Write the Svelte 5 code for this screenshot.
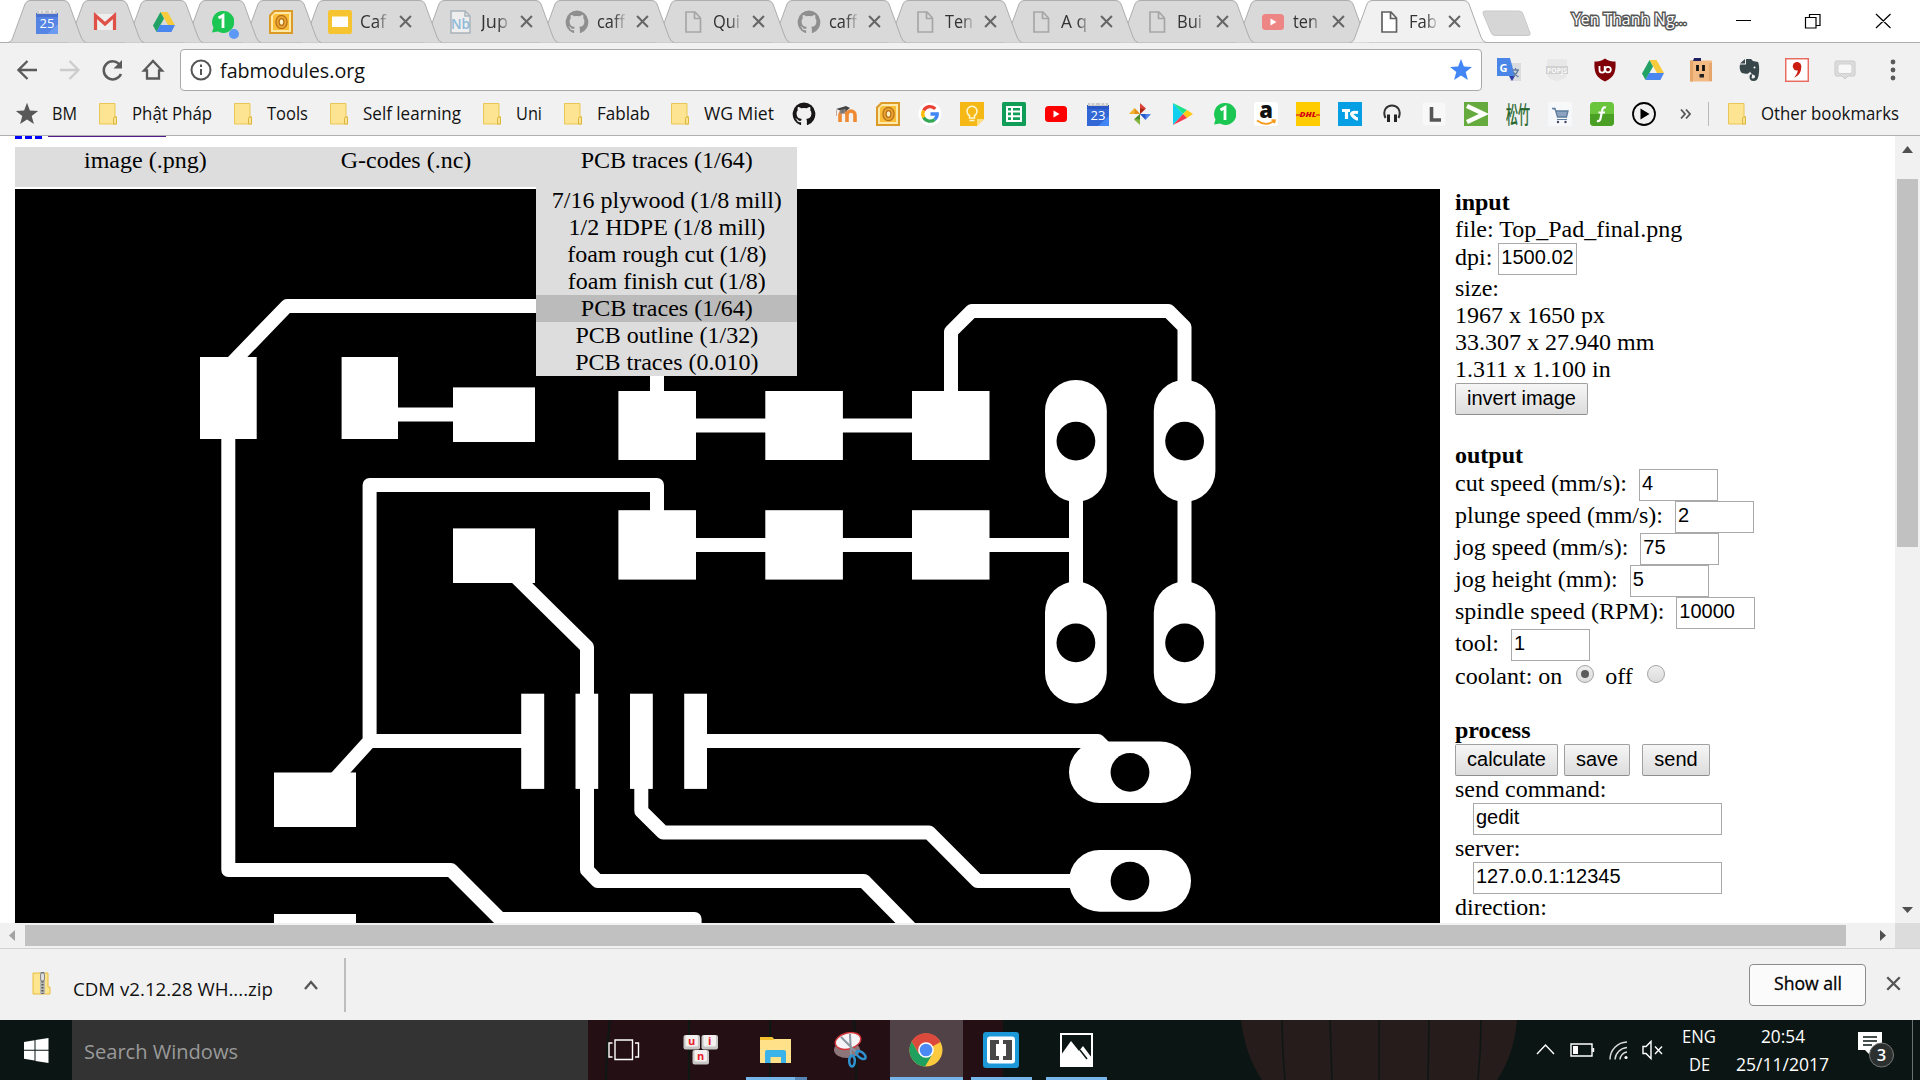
<script>
  const tabs = [
    { icon: 'cal25', w: 78 }, { icon: 'gmail', w: 78 }, { icon: 'drive', w: 79 },
    { icon: 'chat', w: 78, dot: true }, { icon: 'outlook', w: 80 },
    { icon: 'slides', w: 141, t: 'Caf', tw: 26 }, { icon: 'nb', w: 136, t: 'Jup', tw: 27 },
    { icon: 'githubGrey', w: 136, t: 'caff', tw: 28 }, { icon: 'page', w: 136, t: 'Qui', tw: 27 },
    { icon: 'githubGrey', w: 136, t: 'caff', tw: 28 }, { icon: 'page', w: 136, t: 'Ten', tw: 28 },
    { icon: 'page', w: 136, t: 'A q', tw: 26 }, { icon: 'page', w: 136, t: 'Bui', tw: 25 },
    { icon: 'youtubePale', w: 136, t: 'ten', tw: 25 }, { icon: 'pageDark', w: 136, t: 'Fab', tw: 28, active: true }
  ];
  const folders = [
    { t: 'Phật Pháp', tw: 80, w: 135 }, { t: 'Tools', tw: 41, w: 96 },
    { t: 'Self learning', tw: 98, w: 153 }, { t: 'Uni', tw: 26, w: 81 },
    { t: 'Fablab', tw: 53, w: 107 }, { t: 'WG Miet', tw: 70, w: 121 }
  ];
  const marks = ['github', 'moodle', 'outlook', 'google', 'keep', 'sheets', 'youtube', 'cal23', 'photos', 'play', 'chat', 'amazon', 'dhl', 'tc', 'phones', 'ell', 'chevron', 'bamboo', 'cart', 'eff', 'circleplay'];
  const extensions = ['translate', 'popjs', 'ublock', 'drive', 'boxface', 'evernote', 'comma', 'bubble'];
  const presets = ['7/16 plywood (1/8 mill)', '1/2 HDPE (1/8 mill)', 'foam rough cut (1/8)', 'foam finish cut (1/8)', 'PCB traces (1/64)', 'PCB outline (1/32)', 'PCB traces (0.010)'];
  const outputs = [
    ['cut speed (mm/s):', '4'], ['plunge speed (mm/s):', '2'], ['jog speed (mm/s):', '75'],
    ['jog height (mm):', '5'], ['spindle speed (RPM):', '10000'], ['tool:', '1']
  ];
  const pads = [
    [200, 357, 56.7, 82], [341.6, 357, 56.4, 82], [453, 387.4, 82, 54.6], [453, 528.4, 82, 54.6],
    [274, 772.5, 82, 54.5], [274, 914, 82, 20],
    [618.4, 391, 77.6, 69], [765.3, 391, 77.6, 69], [912, 391, 77.5, 69],
    [618.4, 510.2, 77.6, 69.4], [765.3, 510.2, 77.6, 69.4], [912, 510.2, 77.5, 69.4],
    [521.2, 693.7, 23, 95.2], [575.5, 693.7, 22.7, 95.2], [630, 693.7, 22.8, 95.2], [684.2, 693.7, 22.8, 95.2]
  ];
  const traces = [
    '228,367 287,306 600,306', '390,414.6 460,414.6', '228.3,430 228.3,870 451,870 500,919 694.6,919 694.6,940',
    '331.5,783 369.6,741 369.6,485 657,485 657,520', '369.6,741 530,741',
    '514,575 587,647 587,870 597.5,881 864,881 920,938', '641.3,780 641.3,811 663,832.4 929,832.4 977.5,881 1085,881',
    '700,741 1098,741 1117,760', '657,360 657,400', '690,425.5 920,425.5', '690,545 1076,545',
    '951,400 951,331.6 971.7,311 1168.5,311 1184.5,327 1184.5,600', '1076,480 1076,600'
  ];
  const ovals = [
    [1045, 380, 61.8, 121.8], [1153.8, 380, 61.6, 121.8], [1045, 581.6, 61.8, 122], [1153.8, 581.6, 61.6, 122],
    [1069, 741.4, 122, 61.6], [1069, 850, 122, 61.7]
  ];
</script>

{#snippet label(t, w, size, fill)}
  <svg class="label" width={w} height={size * 1.4}>
    <text x="0" y={size * 1.06} textLength={w} lengthAdjust="spacingAndGlyphs" font-size={size} fill={fill}>{t}</text>
  </svg>
{/snippet}

{#snippet cat(c)}
  <path fill={c} d="M12 .5A11.6 11.6 0 0 0 8.3 23c.6.1.8-.3.8-.6v-2.200c-3.200.7-3.900-1.400-3.900-1.400-.5-1.300-1.300-1.700-1.300-1.700-1-.7.1-.7.1-.7 1.200.1 1.800 1.200 1.800 1.200 1 1.800 2.700 1.300 3.400 1 .1-.8.4-1.300.7-1.600-2.600-.3-5.300-1.300-5.300-5.700 0-1.300.5-2.300 1.200-3.100-.1-.3-.5-1.500.1-3.100 0 0 1-.3 3.200 1.200a11 11 0 0 1 5.800 0c2.200-1.500 3.200-1.200 3.200-1.200.6 1.600.2 2.800.1 3.100.8.8 1.200 1.800 1.200 3.100 0 4.500-2.700 5.400-5.300 5.700.4.400.8 1.100.8 2.200v3.200c0 .3.2.7.8.6A11.600 11.600 0 0 0 12 .5z" />
{/snippet}

{#snippet icon(n)}
  <svg class="icon" width="24" height="24" viewBox="0 0 24 24">
    {#if n === 'cal25' || n === 'cal23'}
      <rect x="1" y="3" width="22" height="21" fill={n === 'cal25' ? '#5484e4' : '#3367d6'} />
      <path d="M1 3h22v4H1z" fill={n === 'cal25' ? '#4a71cf' : '#2a56c6'} />
      <path d="M2 1h20v3H2z" fill="#c9c9c9" /><path d="M5 0v3M9 0v3M15 0v3M19 0v3" stroke="#eee" stroke-width="1.500" />
      <path d="M12 24l11-10v10z" fill={n === 'cal25' ? '#6a9bf0' : '#4285f4'} />
      <text x="12" y="18.300" text-anchor="middle" font-size="13" fill="#fff">{n === 'cal25' ? '25' : '23'}</text>
    {:else if n === 'gmail'}
      <rect x="1" y="4" width="22" height="16" fill="#eee" /><path d="M2.500 20V5.500L12 14l9.500-8.500V20" fill="none" stroke="#df5147" stroke-width="3.200" />
    {:else if n === 'drive'}
      <path d="M8.500 2h7L23 15h-7z" fill="#f8cb3c" /><path d="M8.500 2L12 8.500 4.500 22 1 15.500z" fill="#22a264" /><path d="M8 15h15l-3.600 7H4.500z" fill="#4a86ef" />
    {:else if n === 'chat'}
      <path d="M12 1a11 11 0 1 1-4 20.500L2 22.500l1.500-5A11 11 0 0 1 12 1z" fill="#1bc653" /><path d="M8.500 8L13 5.500V18" fill="none" stroke="#fff" stroke-width="2.800" />
    {:else if n === 'outlook'}
      <path d="M5 0h19v24H0V5z" fill="#dc9b28" /><path d="M6 2h16v20H2V6z" fill="#ffe9a8" /><path d="M6 4h14v16H4V6z" fill="#f9bd38" />
      <ellipse cx="12.500" cy="12" rx="4" ry="5" fill="#fff0c0" stroke="#b9701b" stroke-width="4.500" />
      <ellipse cx="12.500" cy="12" rx="4" ry="5" fill="none" stroke="#e9a52f" stroke-width="2" />
    {:else if n === 'slides'}
      <rect width="24" height="24" rx="2.500" fill="#f6c431" /><rect x="4" y="6.500" width="16" height="10.500" fill="#fff" />
    {:else if n === 'nb'}
      <path d="M2 1h14l5 5v17H2z" fill="#eee" stroke="#a9b4bc" stroke-width="1.500" /><path d="M16 1v5h5" fill="none" stroke="#a9b4bc" stroke-width="1.500" />
      <text x="2" y="18.500" font-size="13.500" font-weight="600" textLength="19" lengthAdjust="spacingAndGlyphs" fill="#8fb9d9">Nb</text>
    {:else if n === 'github'}
      {@render cat('#181616')}
    {:else if n === 'githubGrey'}
      {@render cat('#8f8f8f')}
    {:else if n === 'page' || n === 'pageDark'}
      <path d="M5 2h9l5.500 6v14H5zM13.500 2v6.500h6" fill={n === 'page' ? 'none' : '#fff'} stroke={n === 'page' ? '#a6a6a6' : '#606060'} stroke-width="1.700" />
    {:else if n === 'youtube' || n === 'youtubePale'}
      <rect x="1" y="4" width="22" height="16" rx="3.500" fill={n === 'youtube' ? '#f00' : '#ee8585'} /><path d="M9.500 8.500v7l6-3.500z" fill="#fff" />
    {:else if n === 'moodle'}
      <path d="M6 20v-7a3.500 3.500 0 0 1 7 0v7M13 13a3.500 3.500 0 0 1 8 0v7" fill="none" stroke="#ef8a33" stroke-width="3.600" />
      <path d="M2 7l10-3 4 2-5 4z" fill="#444" /><path d="M6 8v4l5-1V7M2.500 8v6" fill="#777" stroke="#b98" stroke-width=".8" />
    {:else if n === 'google'}
      <circle cx="12" cy="12" r="11.500" fill="#fff" />
      <g fill="none" stroke-width="3.300"><path d="M17.300 6.900A7.200 7.200 0 0 0 5.700 8.500" stroke="#ea4335" /><path d="M5.700 8.500a7.200 7.200 0 0 0 0 7" stroke="#fbbc05" /><path d="M5.700 15.500a7.200 7.200 0 0 0 11 1.900" stroke="#34a853" /><path d="M16.700 17.400a7 7 0 0 0 2.500-5.400H12.500" stroke="#4285f4" /></g>
    {:else if n === 'keep'}
      <path d="M0 0h24v17l-7 7H0z" fill="#f5b816" /><path d="M24 17h-7v7z" fill="#ffdf80" /><path d="M9.500 16v-2.500a5 5 0 1 1 5 0V16zM9.500 18.500h5" fill="none" stroke="#fff6cf" stroke-width="1.500" />
    {:else if n === 'sheets'}
      <rect width="24" height="24" rx="1.500" fill="#109d58" /><path d="M5 5h14v14H5zM5 9.600h14M5 14.200h14M10 5v14" fill="none" stroke="#fff" stroke-width="2" />
    {:else if n === 'photos'}
      <path d="M12 12V1l6 5.500z" fill="#d84437" /><path d="M12 12h11l-5.500 6z" fill="#4c83ec" /><path d="M12 12v11l-6-5.500z" fill="#83b53f" /><path d="M12 12H1l5.500-6z" fill="#f2b42e" />
      <path d="M12 12V6.500l5 .5z" fill="#a52714" /><path d="M12 12h5.500v5.500z" fill="#2a56c6" /><path d="M12 12v5.500l-5.500-.5z" fill="#4e8a2e" /><path d="M12 12H6.500L7 6.500z" fill="#e08f1b" />
    {:else if n === 'play'}
      <path d="M3 1l10 11L3 23z" fill="#0fd0ef" /><path d="M3 1l14 7-4 4z" fill="#19e386" /><path d="M17 8l6 4-6 4-4-4z" fill="#ffca16" /><path d="M3 23l14-7-4-4z" fill="#f23b50" />
    {:else if n === 'amazon'}
      <rect width="24" height="24" rx="3" fill="#fff" /><text x="12" y="16" text-anchor="middle" font-size="22" font-weight="800" fill="#111">a</text><path d="M3 18.500c6 4.500 12 4 17 .5M17.500 18l3.500.3-.8 3" fill="none" stroke="#f79a1c" stroke-width="1.700" />
    {:else if n === 'dhl'}
      <rect width="24" height="24" fill="#fc0" /><text x="3.500" y="14.500" textLength="17" lengthAdjust="spacingAndGlyphs" font-size="7" font-weight="800" font-style="italic" fill="#d40511">DHL</text><path d="M0 13h4M20 13h4" stroke="#d40511" />
    {:else if n === 'tc'}
      <rect width="24" height="24" fill="#069fe3" /><path d="M4 8.500h8M8.500 8v9M20 10.500c-6-1-8 1-5 3.500 2 2 3 3 5 3" fill="none" stroke="#fff" stroke-width="3.200" />
    {:else if n === 'phones'}
      <path d="M5.500 16C2 8 7 3.500 12 3.500S22 8 18.500 16" fill="none" stroke="#333" stroke-width="2" /><path d="M7 12.500h3V20H7zM14 12.500h3V20h-3z" fill="#222" />
    {:else if n === 'ell'}
      <rect x=".5" y=".5" width="23" height="23" rx="2" fill="#f8f8f8" /><path d="M9.500 5v13H19" fill="none" stroke="#555" stroke-width="3.600" />
    {:else if n === 'chevron'}
      <rect width="24" height="24" fill="#65aa3d" /><path d="M3 4l17 8-17 8" fill="none" stroke="#fff" stroke-width="4.500" />
    {:else if n === 'bamboo'}
      <text class="cjk" x="0" y="20.500" font-size="23" textLength="24" lengthAdjust="spacingAndGlyphs" fill="#24662c" stroke="#24662c" stroke-width=".5">松竹</text>
    {:else if n === 'cart'}
      <rect width="24" height="24" fill="#f7f8fa" /><path d="M4 6.500h3l2.500 8.500h9l1.500-6H8" fill="#8da4c0" stroke="#5e7d9f" stroke-width="1.300" /><path d="M9 17.500h10" stroke="#5e7d9f" /><circle cx="10" cy="20" r="1.200" fill="#446" /><circle cx="17.500" cy="20" r="1.200" fill="#446" />
    {:else if n === 'eff'}
      <rect width="24" height="24" rx="4" fill="#6ac43c" /><path d="M0 12h24v8a4 4 0 0 1-4 4H4a4 4 0 0 1-4-4z" fill="#4a9f25" /><path d="M16 5.500c-3-.8-3.500 1-4 4l-1.500 7c-.4 2-1.500 3-3.500 2.400M8.500 10.500h6.500" fill="none" stroke="#fff" stroke-width="2.200" />
    {:else if n === 'circleplay'}
      <circle cx="12" cy="12" r="11" fill="none" stroke="#000" stroke-width="1.800" /><path d="M8.500 6.500v11l9-5.500z" />
    {:else if n === 'translate'}
      <path d="M10 5h14v18H13z" fill="#dadce0" /><path d="M0 0h13l5 18H0z" fill="#4a86e8" /><path d="M12 18h6l-3 5z" fill="#2f3fa4" /><text x="2.500" y="13.500" font-size="11" font-weight="700" fill="#fff">G</text><path d="M15 12h7M18.500 10v2M21 12c-1 4-3 5-5 6M16.500 14c1 3 3 4 5 5" fill="none" stroke="#657e9f" stroke-width="1.300" />
    {:else if n === 'popjs'}
      <path d="M2 1h20v7H2zM2 16h20l-2 4-8 3.500L4 20z" fill="#e8e8e8" /><rect x="1" y="8" width="22" height="8" fill="#d1d1d1" /><text x="2" y="14.500" textLength="20" lengthAdjust="spacingAndGlyphs" font-size="7.500" font-weight="700" fill="#fafafa">POPJS</text>
    {:else if n === 'ublock'}
      <path d="M12 .5C9 3 5 3.500 1.500 3.500 1 13 2 19 12 23.500 22 19 23 13 22.500 3.500 19 3.500 15 3 12 .5z" fill="#800007" /><path d="M6.500 8v4a2.600 2.600 0 0 0 5.200 0V8" fill="none" stroke="#fff" stroke-width="1.800" /><circle cx="15" cy="11.600" r="2.800" fill="none" stroke="#fff" stroke-width="1.800" />
    {:else if n === 'boxface'}
      <rect x="1" y="2.500" width="22" height="21" fill="#f4ba83" /><path d="M1 2.500h3v21H1zM20 5h3v18h-3z" fill="#e6a56b" /><path d="M8.500 7v6M14.500 7v6" stroke="#111" stroke-width="2.800" /><path d="M10.500 16h4.500v3.500h-4.500z" fill="#222" /><path d="M5 0h7v3H4z" fill="#20205e" />
    {:else if n === 'evernote'}
      <path d="M9 1h5l2 2 5 1c1.500 3 1.500 9 .5 14-.5 3-2 5-5 5-3 0-4-2-4-4 0-1.800 1-3 2.500-3v2.500c-1 .5-.5 2 1 2 1.800 0 2-1 2-3-2-.5-4-1.500-5-4-1 3-5 2.500-8 1.500C2.500 13 2.500 9 3 6.500h6z" fill="#37474a" /><path d="M3 5.500L8 1v4.500z" fill="#37474a" /><circle cx="17.500" cy="9.500" r="1" fill="#fff" />
    {:else if n === 'comma'}
      <rect x=".7" y=".7" width="22.600" height="22.600" fill="#fff" stroke="#e86a5f" stroke-width="1.500" /><circle cx="12" cy="8.300" r="4.200" fill="#cc1d12" /><path d="M16.200 8c.3 6-2 9.500-7 11.500 2.500-3 4-5.500 3.500-9z" fill="#cc1d12" />
    {:else if n === 'bubble'}
      <path d="M3.500 3h17a1.500 1.500 0 0 1 1.500 1.500v12a1.500 1.500 0 0 1-1.500 1.500H15l-3 3-3-3H3.500A1.500 1.500 0 0 1 2 16.500v-12A1.500 1.500 0 0 1 3.500 3z" fill="#dcdcdc" stroke="#cacaca" /><rect x="5" y="6" width="14" height="9.500" rx="2" fill="#f8f8f8" stroke="#cfcfcf" />
    {:else if n === 'folder'}
      <path d="M3.500 1.500h15.500v13h1.500v7.500H3.500z" fill="#fde492" stroke="#e9c756" /><path d="M17.500 22v-5.500a1.500 1.500 0 0 1 3 0V22z" fill="#fde492" stroke="#dcb53c" />
    {:else if n === 'star'}
      <path d="M12 .8l2.900 7.700 8.200.4-6.400 5.100 2.200 8L12 17.500 5.100 22l2.200-8L.9 8.900l8.200-.4z" fill="#585858" />
    {/if}
  </svg>
{/snippet}

{#snippet cross(s, c, sw)}
  <svg class="icon" width={s} height={s} viewBox="0 0 12 12"><path d="M1 1l10 10M11 1L1 11" stroke={c} stroke-width={sw} /></svg>
{/snippet}

<div class="screen">
  <header class="strip">
    <div class="tabs">
      {#each tabs as tab, i}
        <div class="tab" class:active={tab.active} class:pinned={!tab.t} style:width="{tab.w}px" style:z-index={tab.active ? 30 : 20 - i}>
          <svg class="shape" width={tab.w} height="43">
            <path d="M0 42.500C3 42 4 40 5 37L17 4Q18.500.5 22 .5H{tab.w - 22}Q{tab.w - 18.5} .5 {tab.w - 17} 4L{tab.w - 5} 37Q{tab.w - 3} 42 {tab.w} 42.500" fill={tab.active ? '#f1f1f1' : '#d9d9d9'} stroke="#adadad" />
          </svg>
          {@render icon(tab.icon)}
          {#if tab.dot}<span class="dot"></span>{/if}
          {#if tab.t}
            <span class="title">{@render label(tab.t, tab.tw, 18, '#333')}</span>
            {@render cross(13, '#666', 1.9)}
          {/if}
        </div>
      {/each}
    </div>
    <svg class="newtab" width="52" height="28"><path d="M4 2h34q3 0 4 3l7 19q1 2.500-2 2.500H14q-3 0-4-3L2 4.500Q1.500 2 4 2z" fill="#d6d6d6" stroke="#c8c8c8" /></svg>
    <svg class="profile" width="117" height="30"><text x="0" y="20" textLength="115" lengthAdjust="spacingAndGlyphs" font-size="17">Yen Thanh Ng...</text></svg>
    <svg class="win" width="156" height="16" fill="none" stroke="#000" stroke-width="1.200"><path d="M0 7.500h15M73.500 4.500v-3H84v11h-3.500M69.500 4.500H80v10.500H69.500zM140 1l14.500 14M154.500 1L140 15" /></svg>
  </header>

  <div class="toolbar">
    <svg class="nav" width="150" height="24" fill="none" stroke="#5a5a5a" stroke-width="2.300">
      <path d="M20 12H2M10.500 3L1.500 12l9 9" /><path d="M43 12h18M52.500 3l9 9-9 9" stroke="#ccc" />
      <path d="M104 16a9 9 0 1 1-1-9" stroke-width="2.500" /><path d="M105 2v8.500h-8.500z" fill="#5a5a5a" stroke="none" />
      <path d="M130 20.500v-8h-3L136 3l9 9.500h-3v8z" />
    </svg>
    <div class="address">
      <svg class="icon" width="22" height="22" fill="none" stroke="#555" stroke-width="2"><circle cx="11" cy="11" r="9.500" /><path d="M11 10v6M11 5.500v2.400" /></svg>
      <span class="url">{@render label('fabmodules.org', 145, 20.5, '#111')}</span>
      <svg class="fav" width="24" height="24"><path d="M12 1l2.900 7.600 8.100.4-6.300 5.100 2.200 7.900L12 17.500 5.100 22l2.200-7.900L1 9l8.100-.4z" fill="#4285f4" /></svg>
    </div>
    <div class="extensions">
      {#each extensions as e}{@render icon(e)}{/each}
      <svg class="icon" width="24" height="24" fill="#5a5a5a"><circle cx="12" cy="4" r="2.400" /><circle cx="12" cy="12" r="2.400" /><circle cx="12" cy="20" r="2.400" /></svg>
    </div>
  </div>

  <div class="bookmarks">
    <div class="bm">{@render icon('star')}{@render label('BM', 25, 18, '#111')}</div>
    {#each folders as f}
      <div class="folder" style:width="{f.w}px">{@render icon('folder')}{@render label(f.t, f.tw, 18, '#111')}</div>
    {/each}
    <div class="marks">{#each marks as m}{@render icon(m)}{/each}</div>
    <svg class="more" width="12" height="12" fill="none" stroke="#555" stroke-width="1.800"><path d="M1 1.500L5 6l-4 4.500M6 1.500L10 6l-4 4.500" /></svg>
    <span class="rule"></span>
    <div class="folder">{@render icon('folder')}{@render label('Other bookmarks', 138, 18, '#111')}</div>
  </div>

  <div class="viewport">
    <main class="page">
      <div class="links"><i></i><i></i><i></i><b></b></div>
      <nav class="menu">
        <div>image (.png)</div>
        <div>G-codes (.nc)</div>
        <div>PCB traces (1/64)
          <ul>{#each presets as p, i}<li class:on={i === 4}>{p}</li>{/each}</ul>
        </div>
      </nav>
      <div class="work">
        <svg class="board" width="1425" height="734" viewBox="15 189 1425 734">
          <g fill="none" stroke="#fff" stroke-width="14" stroke-linejoin="round">
            {#each traces as t}<polyline points={t} />{/each}
          </g>
          <g fill="#fff">
            {#each pads as [x, y, w, h]}<rect {x} {y} width={w} height={h} />{/each}
            {#each ovals as [x, y, w, h]}<rect {x} {y} width={w} height={h} rx="30.800" />{/each}
          </g>
          {#each ovals as [x, y, w, h]}<circle cx={x + w / 2} cy={y + h / 2 + .2} r="19.400" />{/each}
        </svg>
        <section class="panel">
          <h2>input</h2>
          <div class="line">file: Top_Pad_final.png</div>
          <div class="row dpi">dpi:<span class="field">1500.02</span></div>
          <div class="line">size:</div>
          <div class="line">1967 x 1650 px</div>
          <div class="line">33.307 x 27.940 mm</div>
          <div class="line">1.311 x 1.100 in</div>
          <div class="row"><button class="invert">invert image</button></div>
          <h2 class="gap">output</h2>
          {#each outputs as [k, v]}
            <div class="row">{k}<span class="field">{v}</span></div>
          {/each}
          <div class="coolant">coolant: on<span class="radio sel"></span>off<span class="radio"></span></div>
          <h2 class="gap">process</h2>
          <div class="row"><button class="calc">calculate</button><button class="save">save</button><button class="send">send</button></div>
          <div class="line">send command:</div>
          <div class="row wide"><span class="field">gedit</span></div>
          <div class="line">server:</div>
          <div class="row wide"><span class="field">127.0.0.1:12345</span></div>
          <div class="line">direction:</div>
        </section>
      </div>
    </main>
    <div class="vbar">
      <svg width="25" height="25" fill="#505050"><path d="M7 17h11l-5.500-7z" /></svg>
      <span></span>
      <svg width="25" height="25" fill="#505050"><path d="M7 9h11l-5.500 6z" /></svg>
    </div>
    <div class="hbar">
      <svg width="25" height="25" fill="#a3a3a3"><path d="M15 7v11l-6-5.500z" /></svg>
      <span></span>
      <svg width="25" height="25" fill="#505050"><path d="M10 7v11l6-5.500z" /></svg>
    </div>
    <div class="corner"></div>
  </div>

  <div class="shelf">
    <svg class="zip" width="20" height="24"><path d="M1 2h15v14h2v7H1z" fill="#fde58f" stroke="#e8bd3c" /><path d="M8 1h5v22H8z" fill="#b8b8b0" /><path d="M10.500 1v22" stroke="#555" stroke-width="2" stroke-dasharray="1.500 1.500" /><rect x="8.500" y="2" width="4" height="8" rx="2" fill="#ddd" stroke="#888" /></svg>
    <span class="fname">{@render label('CDM v2.12.28 WH....zip', 200, 19, '#111')}</span>
    <svg class="up" width="16" height="10"><path d="M2 9l6-7 6 7" fill="none" stroke="#555" stroke-width="2.300" /></svg>
    <span class="divider"></span>
    <div class="showall">{@render label('Show all', 68, 17.5, '#000')}</div>
    {@render cross(15, '#555', 1.9)}
  </div>

  <footer class="taskbar">
    <div class="start"><svg width="25" height="25" fill="#fff"><path d="M0 4l10.500-1.700v9.500H0zM11.500 2L24.500 0v11.800h-13zM0 12.800h10.500v9.600L0 20.700zM11.500 12.800h13V25l-13-2z" /></svg></div>
    <div class="search">{@render label('Search Windows', 154, 20, '#9a9a9a')}</div>
    <div class="apps">
      <svg class="wall" width="415" height="60" fill="none" stroke="#0d1815" stroke-width="2"><path d="M22 0q-4 30-4 60M101 0v60M182 0v60M266 0q3 30 2 60M348 0q6 30 6 60" /></svg>
      <div class="app a1"><svg width="32" height="22" fill="none" stroke="#fff" stroke-width="1.400"><path d="M7 1h17.500v19.500H7zM4.500 4H1v14h3.500M27 4h3.500v14H27" /></svg></div>
      <div class="app a2">
        <svg width="36" height="32">
          {#each [[0, 1, 'u'], [18, 1, 'i'], [9, 16, 'n']] as [x, y, c]}
            <rect x={x + .5} {y} width="16.500" height="14.500" rx="2" fill="#c9c6c6" /><rect x={x + 2.5} {y} width="12.500" height="11.500" rx="1.500" fill="#f4f0f0" />
            <text x={x + 8.7} y={y + 9.5} text-anchor="middle" font-size="11" font-weight="700" fill="#e8202c">{c}</text>
          {/each}
        </svg>
      </div>
      <div class="app a3 run"><svg width="32" height="28"><path d="M0 1h12l2 2h17v24H0z" fill="#ffe18a" /><path d="M0 1h12l2 3H0z" fill="#f5c02e" /><path d="M5 27V16q0-2 2-2h17q2 0 2 2v11h-5v-6H10.500v6z" fill="#3bb2e8" /></svg></div>
      <div class="app a4"><svg width="36" height="36" fill="none"><ellipse cx="14" cy="18" rx="13" ry="8" fill="#8d767a" /><ellipse cx="15" cy="9" rx="13" ry="8" transform="rotate(-14 15 9)" fill="#f5f4f6" stroke="#d0353a" stroke-width="1.500" /><path d="M8 5l16 16M17 2l1 21" stroke="#8a95a0" stroke-width="2" /><ellipse cx="28" cy="23" rx="5.500" ry="2.800" transform="rotate(38 28 23)" stroke="#2e92cf" stroke-width="2.500" /><ellipse cx="19" cy="29" rx="2.800" ry="5.500" stroke="#2e92cf" stroke-width="2.500" /></svg></div>
      <div class="app a5 run"><svg width="34" height="34"><circle cx="17" cy="17" r="16.500" fill="#fbca3e" /><path d="M17 17L2.500 9A16.500 16.500 0 0 1 31.500 9z" fill="#db4a3d" /><path d="M17 9h14.300A16.500 16.500 0 0 0 2.700 8.700L10 21z" fill="#db4a3d" /><path d="M2.700 8.700A16.500 16.500 0 0 0 16 33.500L23.500 21 10 21z" fill="#1fa05f" /><circle cx="17" cy="17" r="7.800" fill="#fff" /><circle cx="17" cy="17" r="6.300" fill="#4a8af4" /></svg></div>
      <div class="app a6 run"><svg width="36" height="36"><rect width="36" height="36" rx="3" fill="#1c97d8" /><rect x="4" y="4.500" width="28" height="27" rx="3" fill="#fff" /><path d="M7 8h9v4h-3v12h3v4H7zM29 8h-9v4h3v12h-3v4h9z" fill="#474747" /></svg></div>
      <div class="app a7 run"><svg width="33" height="34"><rect x="1" y="1" width="31" height="32" fill="#0b1614" stroke="#fff" stroke-width="2" /><path d="M1 22L11 8l8 10 4-5 9 12v8H1z" fill="#fff" /><path d="M20 17l7 9" stroke="#0b1614" stroke-width="1.500" /></svg></div>
    </div>
    <svg class="pumpkin" width="276" height="60"><path d="M0 0h276q-3 35-20 60H21Q4 35 0 0z" fill="#251c1b" /><path d="M41 0q0 30 3 60M89 0l2 60M138 0v60M188 0l-1 60M240 0q0 30-3 60" fill="none" stroke="#0e1614" stroke-width="1.500" /></svg>
    <svg class="tray" width="130" height="22" fill="none" stroke="#fff" stroke-width="1.400">
      <path d="M1 15l8.500-9 8.500 9" /><path d="M35 5h21v12H35zM57.500 9v4" /><path d="M37 7h5v8h-5z" fill="#fff" stroke="none" />
      <g stroke="#ddd"><path d="M74 20.500A17.500 17.500 0 0 1 91 3M79 20.500A13 13 0 0 1 91 8.500M84 20.500A8 8 0 0 1 91 13" /></g><circle cx="90" cy="18.500" r="1.600" fill="#fff" stroke="none" />
      <path d="M107 7.500h3l5-5v17l-5-5h-3zM119 7.500l7 7.500M126 7.500l-7 7.500" />
    </svg>
    <div class="stack lang">{@render label('ENG', 34, 18, '#fff')}{@render label('DE', 21, 18, '#fff')}</div>
    <div class="stack clock">{@render label('20:54', 44, 18, '#fff')}{@render label('25/11/2017', 93, 18, '#fff')}</div>
    <svg class="note" width="38" height="38"><path d="M0 1h24v18H12l0 5-5-5H0z" fill="#fff" /><path d="M5 6h14M5 10h14M5 14h9" stroke="#0b1614" stroke-width="1.400" /><circle cx="23.500" cy="24" r="12" fill="#2c3130" stroke="#777" /><text x="23.500" y="30" text-anchor="middle" font-size="16.500" font-weight="600" fill="#fff">3</text></svg>
    <span class="peek"></span>
  </footer>
</div>

<style>
  :global(body) { margin: 0; background: #fff; }
  .screen { width: 1920px; height: 1080px; overflow: hidden; display: flex; flex-direction: column; background: #fff; font-family: "Open Sans", "Noto Sans", sans-serif; }
  svg { display: block; flex: none; }
  .label { overflow: visible; }
  .cjk { font-family: "Noto Sans CJK SC", sans-serif; }

  .strip { height: 43px; box-sizing: border-box; display: flex; align-items: flex-start; padding-left: 8px; position: relative; box-shadow: inset 0 -1px #adadad; flex: none; }
  .tabs { display: flex; }
  .tab { position: relative; height: 43px; box-sizing: border-box; flex: none; display: flex; align-items: center; margin-right: -20px; padding: 0 0 0 27px; gap: 8px; }
  .tab.pinned { padding: 0; justify-content: center; }
  .tab.active { margin-right: 0; }
  .shape { position: absolute; left: 0; top: 0; }
  .tab > .icon { position: relative; }
  .dot { position: absolute; left: 46px; top: 29px; width: 10px; height: 10px; border-radius: 50%; background: #5c98f5; }
  .title { position: relative; width: 28px; flex: none; -webkit-mask-image: linear-gradient(90deg, #000 60%, rgba(0, 0, 0, .15)); mask-image: linear-gradient(90deg, #000 60%, rgba(0, 0, 0, .15)); }
  .title + :global(svg) { margin-left: 3px; }
  .newtab { margin: 9px 0 0 -5px; }
  .profile { margin: 5px 0 0 39px; overflow: visible; }
  .profile text { fill: #fff; stroke: #555; stroke-width: 3px; paint-order: stroke; }
  .win { margin: 13px 0 0 47px; }

  .toolbar { height: 53px; flex: none; background: #f1f1f1; display: flex; align-items: center; padding-left: 17px; }
  .nav { margin-right: 13px; }
  .address { width: 1302px; height: 42px; box-sizing: border-box; border: 1px solid #a9a9a9; border-radius: 4px; background: #fff; display: flex; align-items: center; padding: 0 8px 0 9px; }
  .url { margin-left: 8px; padding-top: 2px; }
  .fav { margin-left: auto; }
  .extensions { display: flex; gap: 24px; margin-left: 15px; }

  .bookmarks { height: 40px; flex: none; box-sizing: border-box; border-bottom: 1px solid #b0b0b0; background: #f1f1f1; display: flex; align-items: center; padding: 0 0 3px 15px; }
  .bm { display: flex; align-items: center; gap: 13px; width: 81px; }
  .folder { display: flex; align-items: center; gap: 11.5px; flex: none; }
  .marks { display: flex; gap: 18px; margin-left: 3px; }
  .more { margin-left: 24px; }
  .rule { width: 1px; height: 24px; background: #bbb; margin: 0 16px; }

  .viewport { height: 812px; flex: none; display: grid; grid-template: 787px 25px / 1895px 25px; }
  .page { overflow: hidden; background: #fff; font: 24px/27px "Liberation Serif", serif; color: #000; }
  .links { height: 11px; padding-left: 15px; display: flex; gap: 3px; }
  .links i { width: 7px; height: 3px; background: #00f; }
  .links b { width: 118px; height: 1px; background: #551a8b; margin-left: 3px; }
  .menu { width: 782px; height: 40px; margin: 0 0 2px 15px; background: #ddd; display: grid; grid-template-columns: 1fr 1fr 1fr; text-align: center; }
  .menu > div { position: relative; }
  ul { position: absolute; left: 0; top: 40px; width: 261px; margin: 0; padding: 0; list-style: none; background: #ddd; z-index: 2; }
  li { height: 27px; }
  li.on { background: #bbb; }
  .work { display: flex; padding-left: 15px; }
  .board { background: #000; }
  .panel { padding-left: 15px; white-space: nowrap; }
  h2 { font-size: 24px; line-height: 27px; margin: 0; }
  h2.gap { margin-top: 27px; }
  .line { height: 27px; }
  .row { height: 32px; display: flex; line-height: 28px; gap: 12px; }
  .row.dpi { gap: 6px; }
  .row.wide { padding-left: 18px; }
  .field { box-sizing: border-box; width: 79px; height: 32px; border: 1px solid #a9a9a9; padding-left: 2px; font: 20px/27px "Liberation Sans", sans-serif; background: #fff; }
  .wide .field { width: 249px; }
  button { height: 32px; box-sizing: border-box; border: 1px solid #a0a0a0; border-bottom-color: #8e8e8e; border-radius: 2px; padding: 0 0 1px; background: linear-gradient(#f6f6f6, #dcdcdc); font: 20px/27px "Liberation Sans", sans-serif; color: #000; }
  .invert { width: 133px; }
  .calc { width: 103px; }
  .save { width: 66px; margin-left: -6px; }
  .send { width: 68px; }
  .coolant { height: 29px; display: flex; line-height: 30px; }
  .radio { box-sizing: border-box; width: 18px; height: 18px; margin: 4px 12px 0 14px; border: 1px solid #a5a5a5; border-radius: 50%; background: linear-gradient(#eee, #dcdcdc); display: flex; align-items: center; justify-content: center; }
  .radio.sel { margin-right: 11px; }
  .radio.sel::after { content: ""; width: 8px; height: 8px; border-radius: 50%; background: #5b5b5b; }
  .vbar { background: #f1f1f1; display: flex; flex-direction: column; }
  .vbar span { height: 368px; margin: 18px 2px auto; background: #c1c1c1; }
  .hbar { background: #f1f1f1; display: flex; align-items: center; }
  .hbar span { width: 1821px; height: 21px; background: #c1c1c1; margin-right: auto; }
  .corner { background: #dcdcdc; }

  .shelf { height: 72px; flex: none; box-sizing: border-box; border-top: 1px solid #d2d2d2; background: #f1f1f1; display: flex; align-items: center; padding-left: 32px; }
  .zip { margin-bottom: 3px; }
  .fname { margin: 10px 30px 0 21px; }
  .divider { width: 2px; height: 54px; background: #bdbdbd; margin-left: 25px; }
  .showall { box-sizing: border-box; width: 117px; height: 42px; margin: 0 20px 0 auto; border: 1px solid #8c8c8c; border-radius: 4px; background: #fbfbfb; display: flex; align-items: center; justify-content: center; padding-bottom: 2px; stroke: #000; stroke-width: .3px; }
  .shelf > :last-child { margin: 0 19px 2px 0; }

  .taskbar { height: 60px; flex: none; background: #0b1614; display: flex; align-items: center; position: relative; }
  .start { width: 72px; display: flex; justify-content: center; }
  .search { width: 504px; height: 60px; box-sizing: content-box; padding-left: 12px; background: #333; display: flex; align-items: center; }
  .search .label { margin-top: 3px; }
  .apps { width: 519px; height: 60px; display: flex; background: linear-gradient(90deg, #240f15 415px, transparent 415px); position: relative; margin-right: 134px; }
  .wall { position: absolute; left: 0; top: 0; }
  .app { position: relative; height: 60px; box-sizing: border-box; display: flex; align-items: center; justify-content: center; flex: none; }
  .run { border-bottom: 3px solid #76b5ea; padding-top: 3px; }
  .a1 { width: 72px; }
  .a2 { width: 82px; }
  .a3 { width: 61px; margin-left: 4px; padding-right: 1px; border-image: linear-gradient(90deg, #76b5ea 47px, #5686b4 47px) 3; border-width: 0 0 3px; }
  .a4 { width: 74px; margin-left: 7px; }
  .a5 { width: 73px; padding-right: 1px; background: #514248; margin-left: 2px; }
  .a6 { width: 61px; padding-right: 1px; margin-left: 8px; }
  .a7 { width: 61px; padding-right: 1px; margin-left: 14px; }
  .tray { margin: 0 16px 0 19px; }
  .stack { display: flex; flex-direction: column; align-items: center; gap: 2.500px; padding-top: 1px; }
  .clock { margin-left: 20px; }
  .note { margin-left: 29px; }
  .peek { width: 1px; height: 60px; background: #6b7170; margin-left: 16px; }
</style>
